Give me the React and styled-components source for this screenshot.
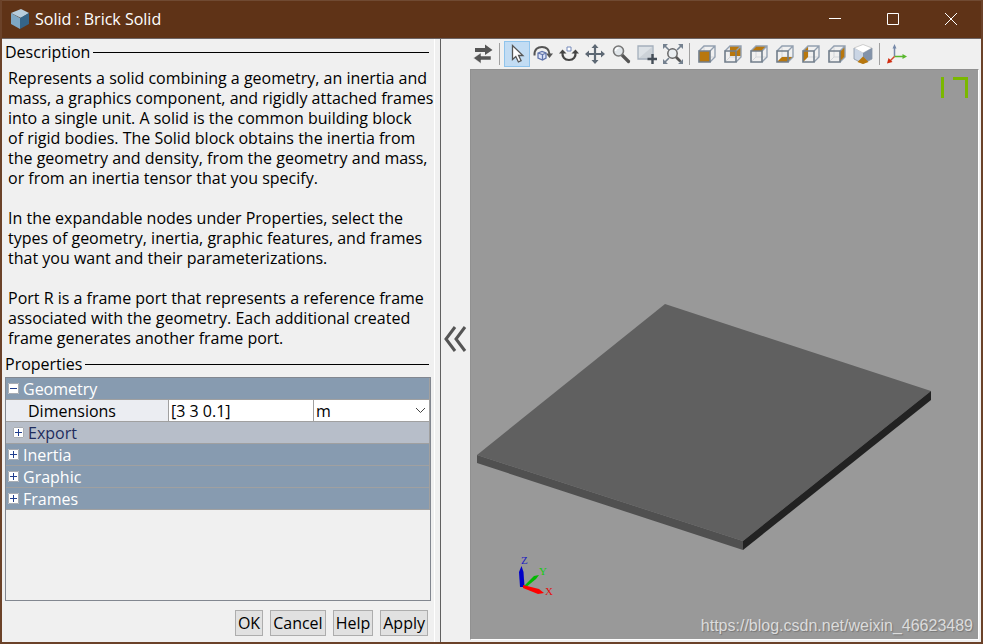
import { useState } from 'react'
import styled, { createGlobalStyle } from 'styled-components'

const GlobalStyle = createGlobalStyle`
  * {
    box-sizing: border-box;
  }
  body {
    margin: 0;
    font-family: 'Open Sans', 'Noto Sans', sans-serif;
    font-size: 16px;
    line-height: 20px;
    color: #000;
  }
  button, input, select {
    font: inherit;
    color: inherit;
  }
`

const Window = styled.div`
  display: flex;
  flex-direction: column;
  min-height: 100vh;
  background: #f0f0f0;
  border: 2px solid #6b4229;
  border-top: 0;
`

const TitleBar = styled.header`
  display: flex;
  align-items: center;
  height: 39px;
  padding: 0 1px 2px 8px;
  background: #5f3317;
  border-top: 1px solid #704a32;
  border-bottom: 1px solid #6c6464;
  color: #fff;
`

const Title = styled.h1`
  flex: 1;
  margin: 0 0 0 3px;
  font-size: 16px;
  line-height: 20px;
  font-weight: 400;
`

const TitleButton = styled.button`
  display: flex;
  align-items: center;
  justify-content: center;
  width: 58px;
  height: 100%;
  padding: 0;
  border: 0;
  background: transparent;
`

const Content = styled.main`
  flex: 1;
  display: grid;
  grid-template-columns: 439px 29px 1fr;
`

const SidePanel = styled.section`
  display: flex;
  flex-direction: column;
  padding: 2px 3px 6px;
  border-right: 1px solid #606060;
  box-shadow: inset -5px 0 0 #f0f0f0, inset -6px 0 0 #fff;
`

const GroupTitle = styled.h2`
  display: flex;
  align-items: center;
  gap: 3px;
  margin: 0 8px 0 0;
  font-size: 16px;
  line-height: 22px;
  font-weight: 400;

  &::after {
    content: '';
    flex: 1;
    height: 1px;
    background: #000;
  }
`

const Description = styled.div`
  padding: 5px 0 5px 3px;

  p {
    margin: 0 0 20px;
    white-space: pre-line;
  }
  p:last-child {
    margin-bottom: 0;
  }
`

const TreeBox = styled.div`
  flex: 1;
  margin: 2px 6px 9px 0;
  border: 1px solid #828790;
`

const TreeTable = styled.table`
  width: 100%;
  table-layout: fixed;
  border-collapse: separate;
  border-spacing: 0;
  border-right: 1px solid #a0a0a0;
`

const TreeRow = styled.tr`
  height: 22px;
  background: ${({ $kind }) => ($kind === 'node' ? '#879bb0' : $kind === 'sub' ? '#b7bec9' : '#ebedf2')};
  color: ${({ $kind }) => ($kind === 'node' ? '#fff' : $kind === 'sub' ? '#1f2d5e' : '#000')};
`

const Cell = styled.td`
  height: 22px;
  padding: 0 0 0 ${({ $indent }) => $indent || 0}px;
  border-bottom: 1px solid #a0a0a0;
  text-align: left;
  font-weight: 400;

  & + & {
    border-left: 1px solid #a0a0a0;
    background: #fff;
  }
`

const NodeLabel = styled.div`
  display: flex;
  align-items: center;
  gap: 4px;
`

const Toggle = styled.button`
  display: flex;
  width: 11px;
  height: 11px;
  padding: 0;
  border: 0;
  background: #fff;
`

const ValueInput = styled.input`
  display: block;
  width: 100%;
  height: 21px;
  padding: 0 2px;
  border: 0;
  outline: 0;
  background: #fff;
`

const SelectWrap = styled.div`
  position: relative;

  svg {
    position: absolute;
    top: 7px;
    right: 3px;
    pointer-events: none;
  }
`

const UnitSelect = styled.select`
  display: block;
  width: 100%;
  height: 21px;
  padding: 0 2px;
  border: 0;
  outline: 0;
  appearance: none;
  background: #fff;
`

const Actions = styled.div`
  display: flex;
  justify-content: flex-end;
  gap: 7px;
  padding-right: 9px;
`

const ActionButton = styled.button`
  height: 26px;
  padding: 0 2px;
  border: 1px solid #adadad;
  background: #e1e1e1;
`

const CollapseButton = styled.button`
  display: flex;
  align-items: center;
  justify-content: center;
  padding: 0 2px 4px 0;
  border: 0;
  background: transparent;
`

const ViewPanel = styled.section`
  display: flex;
  flex-direction: column;
  padding: 0 2px 2px 0;
`

const Toolbar = styled.div`
  display: flex;
  align-items: center;
  padding: 2px 0;
`

const ToolButton = styled.button`
  display: flex;
  align-items: center;
  justify-content: center;
  width: 26px;
  height: 26px;
  padding: 0;
  border: 1px solid ${({ $active }) => ($active ? '#90c4ec' : 'transparent')};
  background: ${({ $active }) => ($active ? '#c2dcf3' : 'transparent')};
`

const Separator = styled.span`
  width: 1px;
  height: 22px;
  margin: 0 4px 0 3px;
  background: #a0a0a0;
`

const Viewport = styled.div`
  position: relative;
  flex: 1;
  display: flex;
  background: #999;
  border: 1px solid #919191;
  border-right-color: #fff;
  border-bottom-color: #fff;
`

const Scene = styled.svg`
  flex: 1;
  width: 100%;
  min-width: 0;
`

const CornerMark = styled.svg`
  position: absolute;
  top: 7px;
  right: 9px;
`

const AxisTriad = styled.svg`
  position: absolute;
  left: 42px;
  bottom: 40px;
  font-family: 'Liberation Serif', serif;
  font-size: 11px;
`

const Watermark = styled.span`
  position: absolute;
  right: 5px;
  bottom: 3px;
  font-family: 'Liberation Sans', sans-serif;
  font-size: 16px;
  color: #dcdcdc;
  text-shadow: 1px 1px 1px #777;
`

const Icon = ({ children, size = 20 }) => (
  <svg width={size} height={size} viewBox={`0 0 ${size} ${size}`} fill="none" aria-hidden="true">
    {children}
  </svg>
)

const faces = {
  front: '2,7 13,7 13,18 2,18',
  back: '7,2 18,2 18,12 7,12',
  top: '2,7 7,2 18,2 13,7',
  bottom: '2,18 7,13 18,13 13,18',
  left: '2,7 7,2 7,13 2,18',
  right: '13,7 18,2 18,13 13,18',
}

const CubeIcon = ({ face }) => (
  <Icon>
    <path d="M2 18l5-5h11M7 13V2" stroke="#d3d6da" />
    <polygon points={faces[face]} fill="#b8770d" />
    <path d="M2 7l5-5h11v11l-5 5M13 7l5-5" stroke="#93a0b0" strokeWidth="1.4" />
    <path d="M2 7h11v11H2z" stroke="#717d8a" strokeWidth="1.6" />
  </Icon>
)

const icons = {
  swap: (
    <Icon>
      <path d="M2 4h10V0.500l7.500 5.500-7.500 5V8H2z" fill="#555" />
      <path d="M18 12H8V8.800L.5 14 8 19.500V16h10z" fill="#555" stroke="#f0f0f0" strokeWidth=".5" />
    </Icon>
  ),
  pointer: (
    <Icon>
      <path d="M5.500 1.500v14l3.300-3 2.600 5.500 2.700-1.300-2.500-5.200h4.300z" fill="#fff" stroke="#555" strokeWidth="1.300" />
    </Icon>
  ),
  orbit: (
    <Icon>
      <path d="M1.500 11.500C1 5 5 3 9 3c4.500 0 7 2 7.500 7" stroke="#555" strokeWidth="2" />
      <path d="M13 9.500h7L16.500 14z" fill="#555" />
      <path d="M5 9l4-1.500L13 9v5l-3.500 2L5 14zM5 9l4.500 1.500L13 9M9.500 10.500V16" fill="#dfe6fa" stroke="#6276ad" strokeWidth="1.300" />
    </Icon>
  ),
  roll: (
    <Icon>
      <path d="M3.500 8c-.5 5 2 8 6.500 8s7-3 6.500-8" stroke="#444" strokeWidth="2.200" />
      <path d="M0 9.500l3.500-4 4 4zM12.500 9.500l4-4 3.500 4z" fill="#444" />
      <path d="M8 3h4v4H8z" fill="#fff" stroke="#7589ba" />
    </Icon>
  ),
  pan: (
    <Icon>
      <path d="M10 3v14M3 10h14" stroke="#5d6874" strokeWidth="2.200" />
      <path d="M10 0l3.500 4h-7zM10 20l3.500-4h-7zM0 10l4-3.500v7zM20 10l-4-3.500v7z" fill="#5d6874" />
    </Icon>
  ),
  zoom: (
    <Icon>
      <path d="M11.500 11.500l6 6" stroke="#555" strokeWidth="3.200" strokeLinecap="round" />
      <circle cx="7.500" cy="7" r="5" fill="#e1e6ea" stroke="#777" strokeWidth="1.600" />
      <path d="M4.500 7c0-2 1-3 3-3" stroke="#fff" strokeWidth="1.500" />
    </Icon>
  ),
  zoomBox: (
    <Icon>
      <path d="M1 2h15v13H1z" fill="#dce1e6" stroke="#a4afbc" strokeWidth="1.300" />
      <path d="M2 14L15 3v11z" fill="#ccd2d8" />
      <path d="M15.500 10v10M10.500 15h9.500" stroke="#444d57" strokeWidth="2.400" />
    </Icon>
  ),
  fit: (
    <Icon>
      <path d="M1 1l5 5M19 1l-5 5M1 19l5-5M19 19l-5-5" stroke="#74818f" strokeWidth="1.600" />
      <path d="M0 0h5L0 5zM20 0v5l-5-5zM0 20v-5l5 5zM20 20h-5l5-5z" fill="#74818f" />
      <path d="M12.500 12.500l4 4" stroke="#555" strokeWidth="2.800" strokeLinecap="round" />
      <circle cx="9.500" cy="9.500" r="4.700" fill="#e9edf0" stroke="#666" strokeWidth="1.500" />
    </Icon>
  ),
  iso: (
    <Icon>
      <path d="M1 4l9-3.500L19 4l-9 5z" fill="#fff" stroke="#bbb" strokeWidth=".7" />
      <path d="M1 4l9 5v10.500L1 15z" fill="#cad5e4" />
      <path d="M19 4l-9 5v10.500l9-4.500z" fill="#8292a9" />
      <path d="M1 4v11l9 4.500 9-4.500V4" stroke="#8995a4" strokeWidth=".8" />
      <path d="M10 12.500l5.500 5.500-5.500 2-5.500-2z" fill="#b8770d" />
    </Icon>
  ),
  axes: (
    <Icon>
      <path d="M7.500 12.500V4" stroke="#7588a8" strokeWidth="1.500" />
      <path d="M5.500 4.500L7.500 0l2 4.500z" fill="#7588a8" />
      <path d="M7.500 12.500H16" stroke="#59b72d" strokeWidth="1.500" />
      <path d="M15.500 10l4.500 2.500-4.500 2.500z" fill="#59b72d" />
      <path d="M7.500 12.500L3 17" stroke="#d24828" strokeWidth="1.500" />
      <path d="M0 19.500L1.500 14l4 4z" fill="#d12c10" />
    </Icon>
  ),
}

const viewTools = [
  ['pointer', 'Select'],
  ['orbit', 'Rotate'],
  ['roll', 'Roll'],
  ['pan', 'Pan'],
  ['zoom', 'Zoom'],
  ['zoomBox', 'Zoom to region'],
  ['fit', 'Fit to view'],
]

const BrickLogo = () => (
  <svg width="22" height="22" viewBox="0 0 22 22" aria-hidden="true">
    <path d="M1 5l10-4 8 4-8 5z" fill="#b7cddd" />
    <path d="M1 5l9 5v11l-9-5z" fill="#7ea7c4" />
    <path d="M19 5l-9 5v11l9-5z" fill="#356488" />
  </svg>
)

const ExpandToggle = ({ open, label, onClick }) => (
  <Toggle type="button" aria-label={label} aria-expanded={open} onClick={onClick}>
    <svg width="11" height="11" viewBox="0 0 11 11" aria-hidden="true">
      <path d="M.5.500h10v10H.5z" fill="#fff" stroke="#a9adb3" />
      <path d={open ? 'M2 5.500h7' : 'M2 5.500h7M5.500 2v7'} stroke="#223f8e" />
    </svg>
  </Toggle>
)

const TreeNode = ({ name, sub, open, onToggle }) => (
  <TreeRow $kind={sub ? 'sub' : 'node'}>
    <Cell colSpan={3} $indent={sub ? 7 : 2}>
      <NodeLabel>
        <ExpandToggle open={open} label={`Toggle ${name}`} onClick={onToggle} />
        {name}
      </NodeLabel>
    </Cell>
  </TreeRow>
)

const PropertiesTree = () => {
  const [open, setOpen] = useState(true)
  const [dimensions, setDimensions] = useState('[3 3 0.1]')

  return (
    <TreeBox>
      <TreeTable>
        <colgroup>
          <col width="162" />
          <col width="145" />
          <col />
        </colgroup>
        <tbody>
          <TreeNode name="Geometry" open={open} onToggle={() => setOpen(!open)} />
          {open && (
            <>
              <TreeRow $kind="field">
                <Cell $indent={22}>
                  <label htmlFor="dimensions">Dimensions</label>
                </Cell>
                <Cell>
                  <ValueInput id="dimensions" value={dimensions} onChange={(e) => setDimensions(e.target.value)} />
                </Cell>
                <Cell>
                  <SelectWrap>
                    <UnitSelect aria-label="Dimensions unit" defaultValue="m">
                      <option>m</option>
                      <option>cm</option>
                      <option>mm</option>
                    </UnitSelect>
                    <svg width="11" height="7" viewBox="0 0 11 7" fill="none" aria-hidden="true">
                      <path d="M1 1l4.500 4.500L10 1" stroke="#444" />
                    </svg>
                  </SelectWrap>
                </Cell>
              </TreeRow>
              <TreeNode name="Export" sub open={false} />
            </>
          )}
          <TreeNode name="Inertia" open={false} />
          <TreeNode name="Graphic" open={false} />
          <TreeNode name="Frames" open={false} />
        </tbody>
      </TreeTable>
    </TreeBox>
  )
}

const ViewToolbar = () => {
  const [active, setActive] = useState('pointer')

  return (
    <Toolbar role="toolbar" aria-label="View">
      <ToolButton aria-label="Swap view">{icons.swap}</ToolButton>
      <Separator />
      {viewTools.map(([id, label]) => (
        <ToolButton key={id} aria-label={label} $active={active === id} onClick={() => setActive(id)}>
          {icons[id]}
        </ToolButton>
      ))}
      <Separator />
      {Object.keys(faces).map((face) => (
        <ToolButton key={face} aria-label={`View ${face}`}>
          <CubeIcon face={face} />
        </ToolButton>
      ))}
      <ToolButton aria-label="Isometric view">{icons.iso}</ToolButton>
      <Separator />
      <ToolButton aria-label="Show frames">{icons.axes}</ToolButton>
    </Toolbar>
  )
}

const SolidView = () => (
  <Viewport>
    <Scene viewBox="0 0 507 569" aria-label="Brick preview">
      <polygon points="194,234 460,321 272,471 6,385" fill="#606060" />
      <polygon points="6,385 272,471 272,480 6,393" fill="#505050" />
      <polygon points="272,471 460,321 460,330 272,480" fill="#222" />
    </Scene>
    <CornerMark width="28" height="21" viewBox="0 0 28 21" aria-hidden="true">
      <path d="M1.500 0v21M12 1.500h14.500M25.500 0v21" fill="none" stroke="#7ab800" strokeWidth="3" />
    </CornerMark>
    <AxisTriad width="44" height="46" viewBox="0 0 44 46" aria-hidden="true">
      <path d="M10 34l11-11 5-1-3 4-11 9z" fill="#0b0" />
      <path d="M7 34L6 19l2.500-6 2 6 1 15z" fill="#0000c8" />
      <path d="M10 32l16 4 5 4-6 1-15-6z" fill="#f00" />
      <text x="8" y="11" fill="#2020c0">Z</text>
      <text x="26" y="22" fill="#1c1">Y</text>
      <text x="32" y="42" fill="#e01010">X</text>
    </AxisTriad>
    <Watermark>https://blog.csdn.net/weixin_46623489</Watermark>
  </Viewport>
)

export default function App() {
  return (
    <Window>
      <GlobalStyle />
      <TitleBar>
        <BrickLogo />
        <Title>Solid : Brick Solid</Title>
        <TitleButton aria-label="Minimize">
          <svg width="12" height="12" stroke="#fff"><path d="M0 5.500h12" /></svg>
        </TitleButton>
        <TitleButton aria-label="Maximize">
          <svg width="12" height="12" stroke="#fff" fill="none"><path d="M.5.500h11v11H.5z" /></svg>
        </TitleButton>
        <TitleButton aria-label="Close">
          <svg width="12" height="12" stroke="#fff"><path d="M0 0l12 12M12 0L0 12" /></svg>
        </TitleButton>
      </TitleBar>
      <Content>
        <SidePanel>
          <GroupTitle>Description</GroupTitle>
          <Description>
            <p>
              {`Represents a solid combining a geometry, an inertia and
              mass, a graphics component, and rigidly attached frames
              into a single unit. A solid is the common building block
              of rigid bodies. The Solid block obtains the inertia from
              the geometry and density, from the geometry and mass,
              or from an inertia tensor that you specify.`}
            </p>
            <p>
              {`In the expandable nodes under Properties, select the
              types of geometry, inertia, graphic features, and frames
              that you want and their parameterizations.`}
            </p>
            <p>
              {`Port R is a frame port that represents a reference frame
              associated with the geometry. Each additional created
              frame generates another frame port.`}
            </p>
          </Description>
          <GroupTitle>Properties</GroupTitle>
          <PropertiesTree />
          <Actions>
            <ActionButton>OK</ActionButton>
            <ActionButton>Cancel</ActionButton>
            <ActionButton>Help</ActionButton>
            <ActionButton>Apply</ActionButton>
          </Actions>
        </SidePanel>
        <CollapseButton aria-label="Collapse panel">
          <svg width="24" height="28" viewBox="0 0 24 28" fill="none" stroke="#555" strokeWidth="3">
            <path d="M12 2L3 14l9 12M22 2l-9 12 9 12" />
          </svg>
        </CollapseButton>
        <ViewPanel>
          <ViewToolbar />
          <SolidView />
        </ViewPanel>
      </Content>
    </Window>
  )
}
